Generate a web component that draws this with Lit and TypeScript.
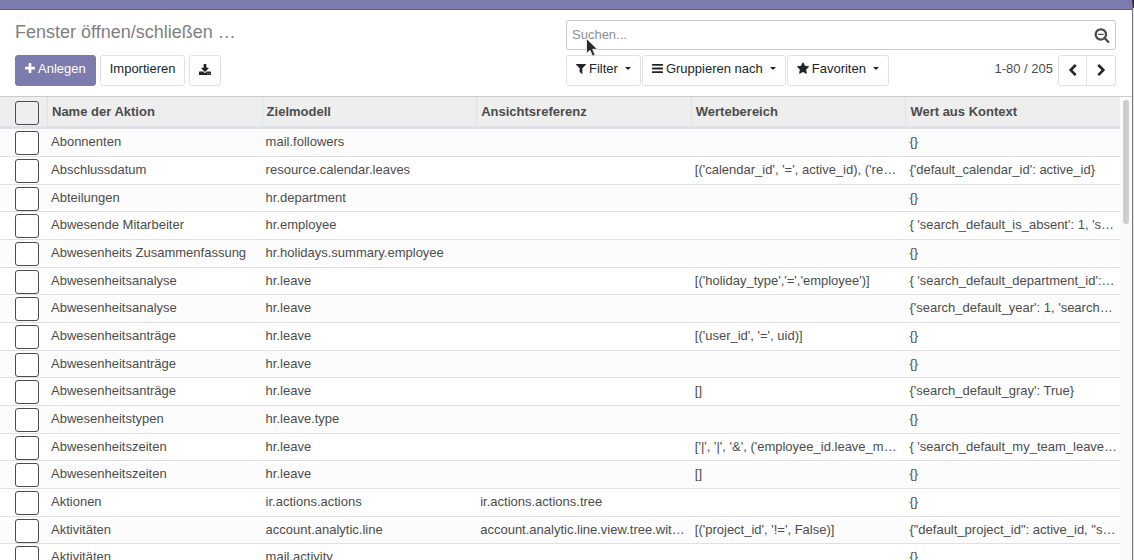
import { LitElement, html, css, svg } from "lit";
import { customElement, state } from "lit/decorators.js";

interface Glyph {
  box: string;
  path: string;
}

const ICONS: Record<string, Glyph> = {
  plus: {
    box: "192 0 1408 1792",
    path: "M1600 736v192q0 40-28 68t-68 28h-416v416q0 40-28 68t-68 28h-192q-40 0-68-28t-28-68v-416h-416q-40 0-68-28t-28-68v-192q0-40 28-68t68-28h416v-416q0-40 28-68t68-28h192q40 0 68 28t28 68v416h416q40 0 68 28t28 68z",
  },
  download: {
    box: "64 0 1664 1792",
    path: "M1344 1344q0-26-19-45t-45-19-45 19-19 45 19 45 45 19 45-19 19-45zm256 0q0-26-19-45t-45-19-45 19-19 45 19 45 45 19 45-19 19-45zm128-224v320q0 40-28 68t-68 28h-1472q-40 0-68-28t-28-68v-320q0-40 28-68t68-28h465l135 136q58 56 136 56t136-56l136-136h464q40 0 68 28t28 68zm-325-569q17 41-14 70l-448 448q-18 19-45 19t-45-19l-448-448q-31-29-14-70 17-39 59-39h256v-448q0-26 19-45t45-19h256q26 0 45 19t19 45v448h256q42 0 59 39z",
  },
  filter: {
    box: "192 0 1408 1792",
    path: "M1595 295q17 41-14 70l-493 493v742q0 42-39 59-13 5-25 5-27 0-45-19l-256-256q-19-19-19-45v-486l-493-493q-31-29-14-70 17-39 59-39h1280q42 0 59 39z",
  },
  bars: {
    box: "128 0 1536 1792",
    path: "M1664 1344v128q0 26-19 45t-45 19h-1408q-26 0-45-19t-19-45v-128q0-26 19-45t45-19h1408q26 0 45 19t19 45zm0-512v128q0 26-19 45t-45 19h-1408q-26 0-45-19t-19-45v-128q0-26 19-45t45-19h1408q26 0 45 19t19 45zm0-512v128q0 26-19 45t-45 19h-1408q-26 0-45-19t-19-45v-128q0-26 19-45t45-19h1408q26 0 45 19t19 45z",
  },
  star: {
    box: "64 0 1664 1792",
    path: "M1728 647q0 22-26 48l-363 354 86 500q1 7 1 20 0 21-10.5 35.5t-30.5 14.5q-19 0-40-12l-449-236-449 236q-22 12-40 12-21 0-31.5-14.5t-10.5-35.5q0-6 2-20l86-500-364-354q-25-27-25-48 0-37 56-46l502-73 225-455q19-41 49-41t49 41l225 455 502 73q56 9 56 46z",
  },
  left: {
    box: "0 0 1792 1792",
    path: "M1427 301l-531 531 531 531q19 19 19 45t-19 45l-166 166q-19 19-45 19t-45-19l-742-742q-19-19-19-45t19-45l742-742q19-19 45-19t45 19l166 166q19 19 19 45t-19 45z",
  },
  right: {
    box: "0 0 1792 1792",
    path: "M1363 877l-742 742q-19 19-45 19t-45-19l-166-166q-19-19-19-45t19-45l531-531-531-531q-19-19-19-45t19-45l166-166q19-19 45-19t45 19l742 742q19 19 19 45t-19 45z",
  },
  searchMinus: {
    box: "0 0 1792 1792",
    path: "M1088 800v64q0 13-9.5 22.5t-22.5 9.5h-576q-13 0-22.5-9.5t-9.5-22.5v-64q0-13 9.5-22.5t22.5-9.5h576q13 0 22.5 9.5t9.5 22.5zm128 32q0-185-131.5-316.5t-316.5-131.5-316.5 131.5-131.5 316.5 131.5 316.5 316.5 131.5 316.5-131.5 131.5-316.5zm512 832q0 53-37.5 90.5t-90.5 37.5q-54 0-90-38l-343-342q-179 124-399 124-143 0-273.5-55.5t-225-150-150-225-55.5-273.5 55.5-273.5 150-225 225-150 273.5-55.5 273.5 55.5 225 150 150 225 55.5 273.5q0 220-124 399l343 343q37 37 37 90z",
  },
};

const icon = (name: string) =>
  html`<svg class="icon ${name}" viewBox=${ICONS[name].box} aria-hidden="true">
    ${svg`<path d=${ICONS[name].path}></path>`}
  </svg>`;

const COLUMNS = ["Name der Aktion", "Zielmodell", "Ansichtsreferenz", "Wertebereich", "Wert aus Kontext"];

const ROWS: string[][] = [
  ["Abonnenten", "mail.followers", "", "", "{}"],
  ["Abschlussdatum", "resource.calendar.leaves", "", "[('calendar_id', '=', active_id), ('re…", "{'default_calendar_id': active_id}"],
  ["Abteilungen", "hr.department", "", "", "{}"],
  ["Abwesende Mitarbeiter", "hr.employee", "", "", "{ 'search_default_is_absent': 1, 's…"],
  ["Abwesenheits Zusammenfassung", "hr.holidays.summary.employee", "", "", "{}"],
  ["Abwesenheitsanalyse", "hr.leave", "", "[('holiday_type','=','employee')]", "{ 'search_default_department_id':…"],
  ["Abwesenheitsanalyse", "hr.leave", "", "", "{'search_default_year': 1, 'search…"],
  ["Abwesenheitsanträge", "hr.leave", "", "[('user_id', '=', uid)]", "{}"],
  ["Abwesenheitsanträge", "hr.leave", "", "", "{}"],
  ["Abwesenheitsanträge", "hr.leave", "", "[]", "{'search_default_gray': True}"],
  ["Abwesenheitstypen", "hr.leave.type", "", "", "{}"],
  ["Abwesenheitszeiten", "hr.leave", "", "['|', '|', '&', ('employee_id.leave_m…", "{ 'search_default_my_team_leave…"],
  ["Abwesenheitszeiten", "hr.leave", "", "[]", "{}"],
  ["Aktionen", "ir.actions.actions", "ir.actions.actions.tree", "", "{}"],
  ["Aktivitäten", "account.analytic.line", "account.analytic.line.view.tree.wit…", "[('project_id', '!=', False)]", '{"default_project_id": active_id, "s…'],
  ["Aktivitäten", "mail.activity", "", "", "{}"],
];

@customElement("app-root")
export class AppRoot extends LitElement {
  @state() private selected = new Set<number>();

  static styles = css`
    :host {
      display: flex;
      height: 100vh;
      overflow: hidden;
      font-family: "Liberation Sans", Arial, sans-serif;
      font-size: 13px;
      line-height: 20px;
      color: #4c4c4c;
      background: #fff;
    }
    * {
      box-sizing: border-box;
    }
    .window {
      flex: 1;
      min-width: 0;
      display: flex;
      flex-direction: column;
    }
    .edge {
      width: 2px;
      border-top: 8px solid #33303c;
      border-left: 1px solid #77777b;
      background: #e6e6e6;
    }
    .navbar {
      flex: none;
      height: 10px;
      background: #7c7bad;
      border-bottom: 1px solid #5f5e97;
    }
    .panel {
      flex: none;
      display: grid;
      grid-template-columns: 1fr 1fr;
      row-gap: 5px;
      padding: 10px 0;
      border-bottom: 1px solid #cacaca;
    }
    .title {
      margin: 0;
      padding: 0 15px;
      font-size: 18px;
      line-height: 24px;
      font-weight: 400;
      color: #7f7f7f;
    }
    .search {
      position: relative;
      display: flex;
      align-items: center;
      height: 30px;
      margin-right: 16px;
      padding: 0 5px;
      border: 1px solid #c8c8c8;
      border-radius: 3px;
    }
    .query {
      flex: 1;
      min-width: 0;
      padding: 0;
      border: 0;
      outline: 0;
      background: none;
      font: inherit;
      color: inherit;
    }
    .query::placeholder {
      color: #8f8f8f;
      opacity: 1;
    }
    .clear {
      padding: 0;
      border: 0;
      background: none;
      color: #4c4c4c;
      display: flex;
    }
    .pointer {
      position: absolute;
      left: 18px;
      top: 16px;
      width: 14px;
      height: 21px;
      pointer-events: none;
    }
    .bar {
      display: flex;
      align-items: center;
    }
    .actions {
      gap: 4px;
      padding: 0 15px;
    }
    .filters {
      gap: 1px;
      margin-right: 16px;
    }
    .btn {
      display: flex;
      align-items: center;
      justify-content: center;
      gap: 3px;
      height: 31px;
      padding: 0 9px 4px;
      border: 1px solid #dee2e6;
      border-radius: 3px;
      background: #fff;
      color: #212529;
      font: inherit;
      white-space: nowrap;
    }
    .primary {
      background: #7c7bad;
      border-color: #7c7bad;
      color: #fff;
    }
    .square {
      padding: 0 9px;
    }
    .icon {
      flex: none;
      display: block;
      width: 13px;
      height: 13px;
      fill: currentColor;
    }
    .plus,
    .filter {
      width: 10px;
    }
    .bars {
      width: 11px;
    }
    .star,
    .download {
      width: 12px;
    }
    .searchMinus {
      width: 16px;
      height: 16px;
    }
    .caret {
      margin-left: 4px;
      border: 3px solid transparent;
      border-top-color: currentColor;
      border-bottom: 0;
    }
    .count {
      margin-left: auto;
      padding: 0 4px 4px 0;
    }
    .pager {
      display: flex;
    }
    .pager .btn {
      width: 29px;
      padding: 0;
    }
    .prev {
      border-radius: 3px 0 0 3px;
    }
    .next {
      border-left: 0;
      border-radius: 0 3px 3px 0;
    }
    .content {
      flex: 1;
      min-height: 0;
      display: flex;
    }
    .list {
      flex: 1;
      min-width: 0;
      overflow: hidden;
    }
    .table {
      width: 100%;
      table-layout: fixed;
      border-collapse: separate;
      border-spacing: 0;
    }
    .pick {
      width: 47px;
    }
    th,
    td {
      overflow: hidden;
      text-overflow: ellipsis;
      white-space: nowrap;
      text-align: left;
      vertical-align: top;
    }
    th {
      height: 32px;
      padding: 5px 4px 0;
      border-left: 1px solid #dee2e6;
      border-bottom: 3px solid #dee2e6;
      background: #eee;
      font-weight: 700;
    }
    td {
      height: 28px;
      padding: 3px 1px 0 4px;
      border-bottom: 1px solid #dee2e6;
    }
    .row:nth-child(3n) td {
      height: 27px;
    }
    .row:nth-child(odd) {
      background: #fcfcfc;
    }
    th.pick {
      border-left: 0;
      padding: 4px 0 0 15px;
    }
    td.pick {
      padding: 2px 0 0 15px;
    }
    .check {
      appearance: none;
      display: block;
      width: 24px;
      height: 24px;
      margin: 0;
      border: 1px solid #4c4c4c;
      border-radius: 3px;
      background: #fff;
    }
    th .check {
      background: #eee;
    }
    .check:checked {
      background: #7c7bad;
    }
    .track {
      flex: none;
      width: 12px;
      padding: 3px 3px 0;
      background: #fafafa;
    }
    .thumb {
      height: 124px;
      border-radius: 3px;
      background: #cdcdcd;
    }
  `;

  private toggle(index: number) {
    const next = new Set(this.selected);
    next.has(index) ? next.delete(index) : next.add(index);
    this.selected = next;
  }

  private toggleAll() {
    this.selected = this.selected.size === ROWS.length ? new Set() : new Set(ROWS.keys());
  }

  private menuButton(name: string, label: string) {
    return html`<button class="btn" type="button" aria-haspopup="true">
      ${icon(name)}<span>${label}</span><span class="caret"></span>
    </button>`;
  }

  render() {
    return html`
      <div class="window">
        <div class="navbar"></div>
        <header class="panel">
          <h1 class="title">Fenster öffnen/schließen …</h1>
          <div class="search">
            <input class="query" type="text" placeholder="Suchen..." aria-label="Suchen" />
            <button class="clear" type="button" aria-label="Erweiterte Suche">${icon("searchMinus")}</button>
            <svg class="pointer" viewBox="0 0 14 21" aria-hidden="true">
              <path
                d="M1.500 1.500V16.500L5 13.300L7.600 19.300L10.200 18.200L7.700 12.300H12.500Z"
                fill="#2a2a2c"
                stroke="#e9e9e9"
                stroke-width="1"
              ></path>
            </svg>
          </div>
          <div class="bar actions">
            <button class="btn primary" type="button">${icon("plus")}<span>Anlegen</span></button>
            <button class="btn" type="button">Importieren</button>
            <button class="btn square" type="button" aria-label="Exportieren">${icon("download")}</button>
          </div>
          <div class="bar filters">
            ${this.menuButton("filter", "Filter")} ${this.menuButton("bars", "Gruppieren nach")}
            ${this.menuButton("star", "Favoriten")}
            <span class="count">1-80 / 205</span>
            <div class="pager">
              <button class="btn prev" type="button" aria-label="Zurück">${icon("left")}</button>
              <button class="btn next" type="button" aria-label="Weiter">${icon("right")}</button>
            </div>
          </div>
        </header>
        <main class="content">
          <div class="list">
            <table class="table">
              <thead>
                <tr>
                  <th class="pick">
                    <input
                      class="check"
                      type="checkbox"
                      aria-label="Alle auswählen"
                      .checked=${this.selected.size === ROWS.length}
                      @change=${this.toggleAll}
                    />
                  </th>
                  ${COLUMNS.map((label) => html`<th scope="col">${label}</th>`)}
                </tr>
              </thead>
              <tbody>
                ${ROWS.map(
                  (cells, index) => html`<tr class="row">
                    <td class="pick">
                      <input
                        class="check"
                        type="checkbox"
                        aria-label=${cells[0]}
                        .checked=${this.selected.has(index)}
                        @change=${() => this.toggle(index)}
                      />
                    </td>
                    ${cells.map((cell) => html`<td>${cell}</td>`)}
                  </tr>`
                )}
              </tbody>
            </table>
          </div>
          <div class="track"><div class="thumb"></div></div>
        </main>
      </div>
      <div class="edge"></div>
    `;
  }
}
